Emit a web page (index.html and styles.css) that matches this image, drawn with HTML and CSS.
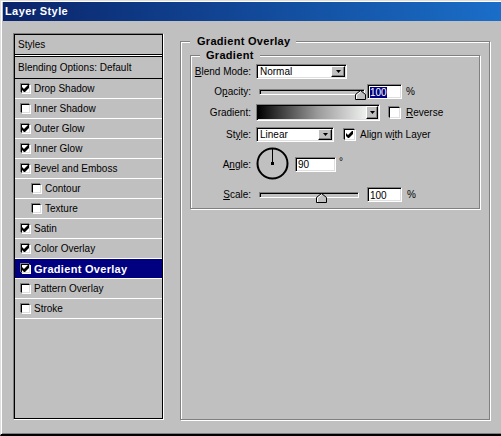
FILE: index.html
```html
<!DOCTYPE html>
<html>
  <head>
    <title>Layer Style</title>
    <link rel="stylesheet" href="styles.css">
  </head>

  <body>
    <div class="window">
      <div class="title-bar">Layer Style</div>

      <div class="dialog-body">
        <!-- left: list of styles -->
        <div class="style-list">
          <div class="style-list-in">
            <div class="list-head">Styles</div>
            <div class="list-blend">Blending Options: Default</div>
            <div class="list-row"><span class="check"><svg class="tick" viewBox="0 0 7 7"><path d="M0 2L2 4L6 0H7V3L3 7H2L0 5Z"/></svg></span>Drop Shadow</div>
            <div class="list-row"><span class="check"></span>Inner Shadow</div>
            <div class="list-row"><span class="check"><svg class="tick" viewBox="0 0 7 7"><path d="M0 2L2 4L6 0H7V3L3 7H2L0 5Z"/></svg></span>Outer Glow</div>
            <div class="list-row"><span class="check"><svg class="tick" viewBox="0 0 7 7"><path d="M0 2L2 4L6 0H7V3L3 7H2L0 5Z"/></svg></span>Inner Glow</div>
            <div class="list-row"><span class="check"><svg class="tick" viewBox="0 0 7 7"><path d="M0 2L2 4L6 0H7V3L3 7H2L0 5Z"/></svg></span>Bevel and Emboss</div>
            <div class="list-row sub"><span class="check"></span>Contour</div>
            <div class="list-row sub"><span class="check"></span>Texture</div>
            <div class="list-row"><span class="check"><svg class="tick" viewBox="0 0 7 7"><path d="M0 2L2 4L6 0H7V3L3 7H2L0 5Z"/></svg></span>Satin</div>
            <div class="list-row"><span class="check"><svg class="tick" viewBox="0 0 7 7"><path d="M0 2L2 4L6 0H7V3L3 7H2L0 5Z"/></svg></span>Color Overlay</div>
            <div class="list-row active"><span class="check"><svg class="tick" viewBox="0 0 7 7"><path d="M0 2L2 4L6 0H7V3L3 7H2L0 5Z"/></svg></span>Gradient Overlay</div>
            <div class="list-row"><span class="check"></span>Pattern Overlay</div>
            <div class="list-row"><span class="check"></span>Stroke</div>
          </div>
        </div>

        <!-- right: options -->
        <div class="group group-outer">
          <span class="legend">Gradient Overlay</span>
          <div class="group group-inner">
            <span class="legend">Gradient</span>

            <div class="field field-blend">
              <span class="field-label"><u>B</u>lend Mode:</span>
              <div class="combo combo-blend">
                <span class="combo-text">Normal</span>
                <span class="combo-btn"><svg width="5" height="3"><polygon points="0,0 5,0 2.5,3"/></svg></span>
              </div>
            </div>

            <div class="field field-opacity">
              <span class="field-label">O<u>p</u>acity:</span>
              <div class="slider">
                <div class="track track-opacity"></div>
                <svg class="thumb thumb-opacity" width="11" height="10"><polygon points="0.5,9.5 0.5,4.5 5.5,0.5 10.5,4.5 10.5,9.5" fill="#c0c0c0" stroke="#000"/><polyline points="1.5,9 1.5,5 5.5,1.8" fill="none" stroke="#fff"/></svg>
              </div>
              <div class="edit edit-num"><span class="sel-text">100</span></div>
              <span class="unit">%</span>
            </div>

            <div class="field field-grad">
              <span class="field-label">Gradient:</span>
              <div class="grad-pick">
                <span class="grad-swatch"></span>
                <span class="combo-btn grad-btn"><svg width="5" height="3"><polygon points="0,0 5,0 2.5,3"/></svg></span>
              </div>
              <span class="check check-big check-reverse"></span>
              <span><u>R</u>everse</span>
            </div>

            <div class="field field-style">
              <span class="field-label">St<u>y</u>le:</span>
              <div class="combo combo-style">
                <span class="combo-text">Linear</span>
                <span class="combo-btn"><svg width="5" height="3"><polygon points="0,0 5,0 2.5,3"/></svg></span>
              </div>
              <span class="check check-big check-align"><svg class="tick" viewBox="0 0 7 7"><path d="M0 2L2 4L6 0H7V3L3 7H2L0 5Z"/></svg></span>
              <span>Align w<u>i</u>th Layer</span>
            </div>

            <div class="field field-angle">
              <span class="field-label">A<u>n</u>gle:</span>
              <svg class="dial" width="34" height="34">
                <circle cx="16.5" cy="16.5" r="15" fill="none" stroke="#000" stroke-width="2"/>
                <line x1="16.5" y1="2" x2="16.5" y2="16" stroke="#000" stroke-width="1"/>
                <rect x="15" y="15" width="3" height="3"/>
              </svg>
              <div class="edit edit-angle">90</div>
              <span class="degree">°</span>
            </div>

            <div class="field field-scale">
              <span class="field-label"><u>S</u>cale:</span>
              <div class="slider">
                <div class="track track-scale"></div>
                <svg class="thumb thumb-scale" width="11" height="10"><polygon points="0.5,9.5 0.5,4.5 5.5,0.5 10.5,4.5 10.5,9.5" fill="#c0c0c0" stroke="#000"/><polyline points="1.5,9 1.5,5 5.5,1.8" fill="none" stroke="#fff"/></svg>
              </div>
              <div class="edit edit-num">100</div>
              <span class="unit unit-scale">%</span>
            </div>
          </div>
        </div>
      </div>
    </div>
  </body>
</html>
```

FILE: styles.css
```css
body {
  margin: 0;
  font-family: "Liberation Sans", Arial, sans-serif;
  font-size: 10px;
  color: #000;
}

.window {
  width: 501px;
  height: 436px;
  box-sizing: border-box;
  background: #c0c0c0;
  border-top: 1px solid #dfdfdf;
  border-left: 1px solid #dfdfdf;
  border-bottom: 2px solid #000;
  padding: 1px 0 0 2px;
  box-shadow: inset 1px 1px 0 #fff, inset 0 -1px 0 #808080;
}

.title-bar {
  height: 19px;
  line-height: 19px;
  padding-left: 2px;
  background: linear-gradient(to right, #0a246a, #1a6ec8);
  color: #fff;
  font-size: 11px;
  font-weight: bold;
  letter-spacing: 0.4px;
}

.dialog-body {
  display: flex;
  align-items: flex-start;
  padding: 12px 0 0 10px;
}

/* style list */
.style-list {
  width: 151px;
  height: 387px;
  box-sizing: border-box;
  border: 1px solid;
  border-color: #808080 #fff #fff #808080;
}
.style-list-in {
  height: 100%;
  box-sizing: border-box;
  border: 1px solid #000;
}
.list-head {
  height: 19px;
  line-height: 19px;
  padding-left: 3px;
  border-bottom: 1px solid #000;
  box-shadow: 0 1px 0 #fff;
}
.list-blend {
  margin-top: 1px;
  height: 21px;
  line-height: 21px;
  padding-left: 3px;
  border-top: 1px solid #000;
  border-bottom: 1px solid #000;
}
.list-row {
  display: flex;
  align-items: center;
  height: 19px;
  padding-left: 5px;
  border-bottom: 1px solid #fff;
}
.list-row.sub {
  padding-left: 16px;
}
.list-row.active {
  background: #000080;
  color: #fff;
  font-size: 11px;
  font-weight: bold;
  letter-spacing: 0.3px;
}

/* checkboxes */
.check {
  display: inline-flex;
  align-items: center;
  justify-content: center;
  width: 9px;
  height: 9px;
  box-sizing: border-box;
  margin: 0 4px 0 1px;
  border: 1px solid;
  border-color: #000 #dfdfdf #dfdfdf #000;
  background: #fff;
  box-shadow: -1px -1px 0 #808080, 1px 1px 0 #fff;
  flex: none;
}
.check-big {
  width: 11px;
  height: 11px;
}
.tick {
  width: 7px;
  height: 7px;
  fill: #000;
}
.check-reverse {
  margin: 0 6px 0 9px;
}
.check-align {
  margin: 0 5px 0 10px;
}

/* group boxes */
.group {
  position: relative;
  box-sizing: border-box;
  border: 1px solid #808080;
  box-shadow: inset 1px 1px 0 #fff, 1px 1px 0 #fff;
}
.group-outer {
  width: 310px;
  height: 379px;
  margin: 8px 0 0 16px;
}
.group-inner {
  width: 290px;
  height: 154px;
  margin: 13px 0 0 9px;
  padding-top: 8px;
}
.legend {
  position: absolute;
  top: -7px;
  left: 9px;
  padding: 0 6px 0 7px;
  background: #c0c0c0;
  font-size: 11px;
  font-weight: bold;
  letter-spacing: 0.3px;
  line-height: 13px;
}
.group-inner .legend {
  left: 9px;
  padding: 0 6px;
}

/* option rows */
.field {
  display: flex;
  align-items: center;
}
.field-label {
  width: 60px;
  margin-right: 5px;
  text-align: right;
  flex: none;
}
.field-blend { height: 15px; }
.field-opacity { height: 15px; margin-top: 5px; }
.field-grad { height: 17px; margin-top: 5px; }
.field-style { height: 15px; margin-top: 6px; }
.field-angle { height: 34px; margin-top: 5px; }
.field-scale { height: 15px; margin-top: 6px; }

/* combo boxes */
.combo,
.grad-pick,
.edit {
  display: flex;
  align-items: center;
  box-sizing: border-box;
  border: 1px solid;
  border-color: #808080 #fff #fff #808080;
  background: #fff;
  box-shadow: inset 1px 1px 0 #000, inset -1px -1px 0 #dfdfdf;
}
.combo {
  height: 15px;
  padding: 1px;
}
.combo-blend { width: 91px; }
.combo-style { width: 78px; }
.combo-text {
  flex: 1;
  padding-left: 2px;
}
.combo-btn {
  display: flex;
  align-items: center;
  justify-content: center;
  width: 14px;
  height: 100%;
  box-sizing: border-box;
  border: 1px solid;
  border-color: #fff #000 #000 #fff;
  background: #c0c0c0;
  box-shadow: inset -1px -1px 0 #808080;
}

/* gradient picker */
.grad-pick {
  width: 124px;
  height: 17px;
  padding: 1px;
}
.grad-swatch {
  flex: 1;
  height: 100%;
  background: linear-gradient(to right, #000, #3a3a3a 20%, #9a9a9a 55%, #eef0ee);
}
.grad-btn {
  width: 12px;
}

/* sliders */
.slider {
  position: relative;
  padding: 0 2px 0 3px;
}
.track {
  height: 6px;
  box-sizing: border-box;
  border: 1px solid;
  border-color: #808080 #fff #fff #808080;
  background: #c0c0c0;
  box-shadow: inset 1px 1px 0 #000;
}
.track-opacity { width: 106px; }
.track-scale { width: 100px; margin-right: 6px; }
.thumb {
  position: absolute;
  top: 1px;
}
.thumb-opacity { left: 99px; }
.thumb-scale { left: 60px; }

/* edit fields */
.edit {
  height: 15px;
  padding: 1px 0 0 2px;
}
.edit-num { width: 35px; }
.edit-angle { width: 41px; margin-left: 5px; }
.sel-text {
  background: #000080;
  color: #fff;
  line-height: 11px;
}
.unit {
  margin-left: 4px;
}
.unit-scale {
  margin-left: 5px;
}
.degree {
  margin: 0 0 6px 3px;
}
```
